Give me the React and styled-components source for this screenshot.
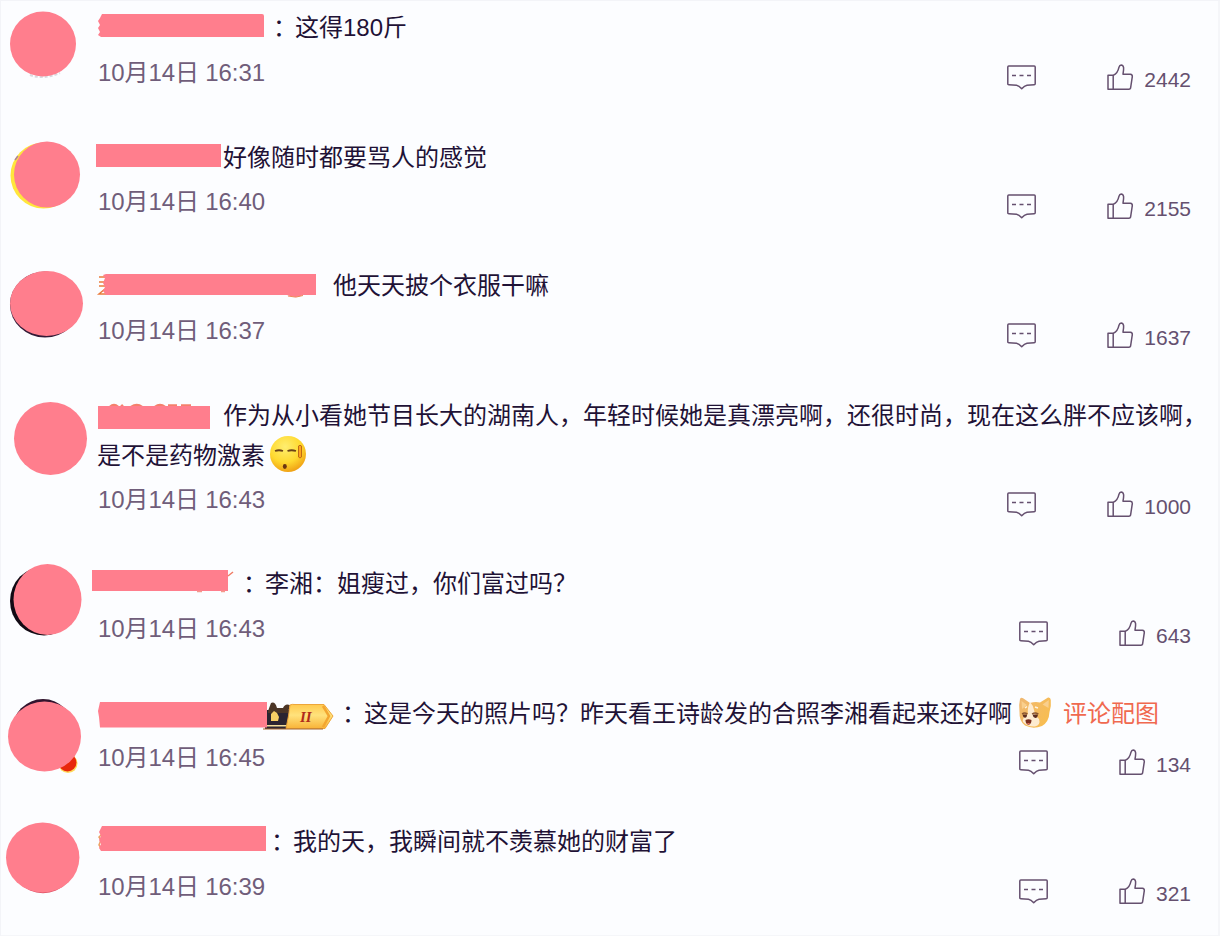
import React from 'react'
import styled, { createGlobalStyle } from 'styled-components'

const PINK = '#ff7e8d'

const comments = [
  {
    id: 1,
    height: 130,
    date: '10月14日 16:31',
    likes: 2442,
    nameWidth: 174,
    colon: true,
    text: '这得180斤',
    avatar: (
      <>
        <path d="M30 75 Q43 80 60 73" stroke="#d9d9df" strokeWidth="2" strokeDasharray="3 2" />
        <ellipse cx="43" cy="44" rx="33" ry="32.5" fill={PINK} />
      </>
    ),
    name: <path d="M5 7 H165 Q167 7 167 9 V30 H4 L1 28 L3 25 L1 21 L3 18 L1 14 L3 11 Z" fill={PINK} />,
  },
  {
    id: 2,
    height: 128,
    tight: true,
    date: '10月14日 16:40',
    likes: 2155,
    nameWidth: 126,
    text: '好像随时都要骂人的感觉',
    avatar: (
      <>
        <circle cx="43.5" cy="45.5" r="33" fill="#ffe63c" />
        <circle cx="47" cy="44.5" r="33" fill={PINK} />
        <path d="M15 30 L18 26" stroke="#b0809a" strokeWidth="1.5" />
      </>
    ),
    name: <path d="M-1 7 H124 V30 H-1 Z" fill={PINK} />,
  },
  {
    id: 3,
    height: 130,
    date: '10月14日 16:37',
    likes: 1637,
    nameWidth: 236,
    text: '他天天披个衣服干嘛',
    avatar: (
      <>
        <ellipse cx="45" cy="46.5" rx="35" ry="33" fill="#321a36" />
        <ellipse cx="46.5" cy="45.5" rx="36.5" ry="32.5" fill={PINK} />
      </>
    ),
    name: (
      <>
        <path d="M2 12 H9 M2 17 H9 M2 21 H9 M8 24 L2 29 H9" stroke="#e97b3c" strokeWidth="1.5" />
        <path d="M9 9 H219 V30 H206 Q199 34 190 30 H9 L6 26 L8 22 L6 18 L8 13 L6 10 Z" fill={PINK} />
        <path d="M191 31 Q199 33.5 206 30.5" stroke="#f08a5a" />
      </>
    ),
  },
  {
    id: 4,
    height: 168,
    tight: true,
    date: '10月14日 16:43',
    likes: 1000,
    nameWidth: 126,
    text: '作为从小看她节目长大的湖南人，年轻时候她是真漂亮啊，还很时尚，现在这么胖不应该啊，',
    rest: '是不是药物激素',
    avatar: <ellipse cx="50.5" cy="50.5" rx="36.5" ry="36.5" fill={PINK} />,
    name: (
      <>
        <path d="M13 12 Q17 8 21 12 M24 12 L26 10 M34 12 Q40 8 45 12 M58 12 Q63 8 68 12 M71 10.5 H80 M84 10.5 H94" stroke="#f5806c" strokeWidth="2.5" />
        <path d="M1 11 H113 V34 H1 Z" fill={PINK} />
      </>
    ),
  },
  {
    id: 5,
    height: 130,
    date: '10月14日 16:43',
    likes: 643,
    nameWidth: 144,
    colon: true,
    text: '李湘：姐瘦过，你们富过吗？',
    avatar: (
      <>
        <ellipse cx="44" cy="45" rx="34" ry="34.5" fill="#120a14" />
        <ellipse cx="47.5" cy="43.5" rx="34" ry="35.5" fill={PINK} />
      </>
    ),
    name: (
      <>
        <path d="M-5 7 H131 V28 H-5 Z" fill={PINK} />
        <path d="M131 13 L136 9" stroke="#ef7a63" strokeWidth="1.5" />
        <path d="M100 28.5 H105 M124 28.5 H128" stroke="#f49a8c" strokeWidth="1.5" />
      </>
    ),
  },
  {
    id: 6,
    height: 128,
    tight: true,
    date: '10月14日 16:45',
    likes: 134,
    nameWidth: 243,
    colon: true,
    text: '这是今天的照片吗？昨天看王诗龄发的合照李湘看起来还好啊',
    attachment: '评论配图',
    avatar: (
      <>
        <ellipse cx="43" cy="45" rx="31" ry="32" fill="#32142e" />
        <circle cx="68" cy="77.5" r="9.5" fill="#ffd95a" />
        <circle cx="67.5" cy="76.5" r="9" fill="#e8270c" />
        <ellipse cx="44.5" cy="50.5" rx="36.5" ry="35" fill={PINK} />
      </>
    ),
    name: (
      <>
        <LevelBadge />
        <path d="M3 9 H170 V34.5 H3 L2 24 L1 18 Z" fill={PINK} />
      </>
    ),
  },
  {
    id: 7,
    height: 122,
    date: '10月14日 16:39',
    likes: 321,
    nameWidth: 172,
    colon: true,
    text: '我的天，我瞬间就不羡慕她的财富了',
    avatar: (
      <>
        <ellipse cx="43" cy="44.5" rx="34" ry="34.7" fill="#df5064" />
        <ellipse cx="42.7" cy="43.5" rx="36.7" ry="35" fill={PINK} />
      </>
    ),
    name: (
      <>
        <path d="M5 13 L2 16 L4 19 L2 24 L4 27" stroke="#eda063" strokeWidth="1.5" />
        <path d="M5 5 H169 V30 H4 L2 27 L4 23 L2 19 L4 15 L2 11 Z" fill={PINK} />
      </>
    ),
  },
]

function LevelBadge() {
  return (
    <>
      <defs>
        <linearGradient id="gold" x1="0" y1="0" x2="0" y2="1">
          <stop offset="0" stopColor="#ffc94e" />
          <stop offset="0.45" stopColor="#ffe27c" />
          <stop offset="1" stopColor="#f9b338" />
        </linearGradient>
      </defs>
      <path d="M168 17 H192 V36 H168 Z" fill="#2a2431" />
      <path d="M171 18 L174 10 Q178 8 180 15 L186 15 Q188 10 193 12 L191 20 H171 Z" fill="#4b3526" />
      <path d="M174 21 L177 18 L180 20 L182 24 L181 28 H174 Z" fill="#f7cf65" />
      <path d="M170 32 H190 V33.5 H170 Z" fill="#f2dd9b" />
      <path d="M193 12 Q195 11 198 11.5 H227 L236 23 L228 35.5 H189 Q192 22 193 12 Z" fill="url(#gold)" stroke="#eda63a" />
      <path d="M226 13 L232 23 L226 34" stroke="#f3a630" strokeWidth="2.5" />
      <path d="M166 36 H226" stroke="#a8682f" />
      <BadgeText x="203" y="29">
        II
      </BadgeText>
    </>
  )
}

const CommentIcon = () => (
  <Icon width="30" height="26" viewBox="0 0 30 26">
    <path d="M1.8 1 H27.2 Q28.2 1 28.2 2 V18.7 Q28.2 19.7 27.2 19.7 L20 20.2 Q17.5 20.7 14.7 23.8 Q12 20.7 9.5 20.2 L1.8 19.7 Q0.8 19.7 0.8 18.7 V2 Q0.8 1 1.8 1 Z" />
    <path d="M5 10.5 H9 M12.5 10.5 H16.5 M20 10.5 H24" />
  </Icon>
)

const LikeIcon = () => (
  <Icon width="27" height="27" viewBox="0 0 27 27">
    <path d="M6.3 11.3 H1 V25.2 H22 Q23.3 25.2 23.6 24 L25.3 12.6 Q25.5 10.4 23.4 10.2 H16 Q16.8 6 16.6 3.6 Q16 1 14.2 1 Q12.6 1.1 12 3.2 Q10.6 9.8 6.3 11.3 Z" />
    <path d="M6.2 11.3 V25.2" />
  </Icon>
)

const SweatFace = () => (
  <Emoji $gap={4} width="38" height="38" viewBox="0 0 38 38">
    <defs>
      <radialGradient id="face" cx="0.42" cy="0.3" r="0.72">
        <stop offset="0" stopColor="#ffee70" />
        <stop offset="0.6" stopColor="#ffd92f" />
        <stop offset="1" stopColor="#ef9f14" />
      </radialGradient>
    </defs>
    <circle cx="19" cy="18" r="18" fill="url(#face)" />
    <path d="M6 15 Q10 13.5 14 15 M18.5 15 Q22.5 13.5 27 15" stroke="#6b4217" strokeWidth="1.8" />
    <path d="M29.5 10 Q31 8.5 32.5 10 V21 Q31 23 29.5 21 Z" fill="#ffa41c" stroke="#bf6a13" />
    <ellipse cx="15.8" cy="30.5" rx="2" ry="2.4" fill="#6b3510" />
  </Emoji>
)

const DogFace = () => (
  <Emoji $gap={6} width="34" height="34" viewBox="0 0 34 34">
    <defs>
      <linearGradient id="fur" x1="0" y1="0" x2="1" y2="0.6">
        <stop offset="0" stopColor="#efb873" />
        <stop offset="1" stopColor="#f8bd50" />
      </linearGradient>
    </defs>
    <path d="M2 3 Q3 1 5.5 2.5 L12 7 Q17 5.5 22 6.5 L30 1.5 Q32.5 1 32.8 4 Q33.5 10 31.5 16 Q31 26 24 30 Q15 33.5 7 29.5 Q1 25 1.5 16 Q0.5 9 2 3 Z" fill="url(#fur)" />
    <path d="M12 6 Q9 12 10 18 Q4 21 5 26 Q10 31 17 30.5 Q23 29 21 23 Q17 20 16 14 Q15 9 12 6 Z" fill="#fdebd0" />
    <path d="M3.5 5 L9 9 L4 13 Z M30.8 4 L24.5 8.5 L30.5 12 Z" fill="#f9cf8d" />
    <path d="M7 12 L9 10.5 M17 11 L20 12" stroke="#fff4e1" strokeWidth="1.5" />
    <path d="M4 18 Q6.5 16 9.5 18 M14 18 Q17 16 20.5 18" stroke="#8a5630" strokeWidth="1.3" />
    <path d="M4.5 18.5 H9 Q9 22 6.8 21.8 Q5 21.5 4.5 18.5 Z M14.5 18.5 H20 Q19.5 22 17.3 22 Q15 21.5 14.5 18.5 Z" fill="#5c2d20" />
    <path d="M7.5 24 Q10.5 22.5 13.5 24 Q13.5 28 10.5 29 Q7.5 28 7.5 24 Z" fill="#7a2d1e" />
    <path d="M9 27 H12 L10.5 29 Z" fill="#e0705a" />
  </Emoji>
)

const Comment = ({ comment }) => (
  <Row $height={comment.height}>
    <Avatar viewBox="0 0 97 100">{comment.avatar}</Avatar>
    <Body>
      <Line>
        <Name $width={comment.nameWidth}>{comment.name}</Name>
        {comment.colon && <Colon>：</Colon>}
        <Text>{comment.text}</Text>
        {comment.attachment && (
          <>
            <DogFace />
            <Attachment>{comment.attachment}</Attachment>
          </>
        )}
      </Line>
      {comment.rest && (
        <Line>
          <Text>{comment.rest}</Text>
          <SweatFace />
        </Line>
      )}
      <Footer $tight={comment.tight}>
        <DateText>{comment.date}</DateText>
        <Actions>
          <CommentIcon />
          <Like>
            <LikeIcon />
            <Count>{comment.likes}</Count>
          </Like>
        </Actions>
      </Footer>
    </Body>
  </Row>
)

export default function App() {
  return (
    <>
      <GlobalStyles />
      <List>
        {comments.map((comment) => (
          <Comment key={comment.id} comment={comment} />
        ))}
      </List>
    </>
  )
}

const GlobalStyles = createGlobalStyle`
  body {
    margin: 0;
    background: #fcfdff;
    font-family: 'Liberation Sans', 'Noto Sans CJK SC', sans-serif;
    color: #1f1236;
  }
`

const List = styled.main`
  box-sizing: border-box;
  width: 1220px;
  height: 936px;
  overflow: hidden;
  box-shadow: inset 1px 1px 0 #f3f4f8, inset -2px -1px 0 #f5f6f9;
`

const Row = styled.article`
  display: flex;
  height: ${({ $height }) => $height}px;
`

const Avatar = styled.svg`
  flex: none;
  width: 97px;
  height: 100px;
  fill: none;
`

// Comment body
//
const Body = styled.div`
  flex: 1;
  min-width: 0;
  padding-top: 7px;
`

const Line = styled.div`
  display: flex;
  align-items: center;
  height: 40px;
  font-size: 24px;
  line-height: 38px;
  white-space: nowrap;
`

const Name = styled.svg`
  flex: none;
  width: ${({ $width }) => $width}px;
  height: 40px;
  overflow: visible;
  fill: none;
`

const Text = styled.span`
  padding-top: 2px;
`

const Colon = styled(Text)`
  width: 24px;
  text-indent: 2px;
`

const BadgeText = styled.text`
  font: italic bold 15px 'Liberation Serif', serif;
  fill: #b02a1a;
`

const Emoji = styled.svg`
  flex: none;
  margin-left: ${({ $gap }) => $gap}px;
  fill: none;
`

const Attachment = styled(Text)`
  margin-left: 11px;
  color: #f0694f;
`

// Date and actions
//
const Footer = styled.div`
  display: flex;
  justify-content: space-between;
  height: 52px;
  margin-top: ${({ $tight }) => ($tight ? '-1px' : '0')};
  padding: 0 29px 0 1px;
`

const DateText = styled.time`
  font-size: 24px;
  line-height: 52px;
  letter-spacing: -0.1px;
  color: #705d7a;
`

const Actions = styled.div`
  display: flex;
  align-items: center;
  gap: 70px;
  padding-top: 9px;
`

const Like = styled.div`
  display: flex;
  align-items: center;
  gap: 10px;
`

const Icon = styled.svg`
  flex: none;
  fill: none;
  stroke: #65506f;
  stroke-width: 1.5;
  stroke-linejoin: round;
`

const Count = styled.span`
  padding-top: 4px;
  font-size: 21px;
  color: #65506f;
`
